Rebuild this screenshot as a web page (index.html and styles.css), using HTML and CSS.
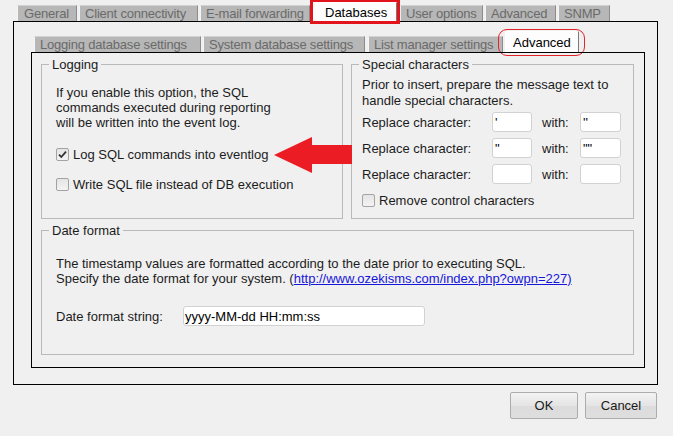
FILE: index.html
```html
<!DOCTYPE html>
<html>
<head>
<meta charset="utf-8">
<link rel="stylesheet" href="styles.css">
</head>
<body>
<div class="dialog">
  <div class="tabstrip outer-tabs">
    <div class="tab t-general">General</div>
    <div class="tab t-client">Client connectivity</div>
    <div class="tab t-email">E-mail forwarding</div>
    <div class="tab selected marked t-db">Databases</div>
    <div class="tab t-user">User options</div>
    <div class="tab t-adv">Advanced</div>
    <div class="tab t-snmp">SNMP</div>
  </div>
  <div class="outer-panel">
    <div class="tabstrip inner-tabs">
      <div class="tab t-logdb">Logging database settings</div>
      <div class="tab t-sysdb">System database settings</div>
      <div class="tab t-list">List manager settings</div>
      <div class="tab selected circled t-inadv">Advanced</div>
    </div>
    <div class="inner-panel">
      <div class="groups-top">
        <fieldset class="group logging">
          <legend>Logging</legend>
          <div class="group-body logging-body">
            <p class="note">If you enable this option, the SQL<br>commands executed during reporting<br>will be written into the event log.</p>
            <label class="check-row first">
              <span class="checkbox checked"><svg viewBox="0 0 13 13" width="13" height="13"><path d="M3 6.6 L5.3 9 L10 3.6" fill="none" stroke="#333" stroke-width="1.8"/></svg></span>
              <span>Log SQL commands into eventlog</span>
            </label>
            <label class="check-row">
              <span class="checkbox"></span>
              <span>Write SQL file instead of DB execution</span>
            </label>
          </div>
        </fieldset>
        <fieldset class="group special">
          <legend>Special characters</legend>
          <div class="group-body special-body">
            <p class="note">Prior to insert, prepare the message text to<br>handle special characters.</p>
            <div class="replace-grid">
              <span>Replace character:</span><span class="field small">'</span><span class="with">with:</span><span class="field small">''</span>
              <span>Replace character:</span><span class="field small">"</span><span class="with">with:</span><span class="field small">""</span>
              <span>Replace character:</span><span class="field small"></span><span class="with">with:</span><span class="field small"></span>
            </div>
            <label class="check-row remove">
              <span class="checkbox"></span>
              <span>Remove control characters</span>
            </label>
          </div>
        </fieldset>
      </div>
      <fieldset class="group date">
        <legend>Date format</legend>
        <div class="group-body date-body">
          <p class="note">The timestamp values are formatted according to the date prior to executing SQL.<br>Specify the date format for your system. (<a class="link" href="#">http://www.ozekisms.com/index.php?owpn=227)</a></p>
          <div class="date-row">
            <span class="date-label">Date format string:</span>
            <span class="field wide">yyyy-MM-dd HH:mm:ss</span>
          </div>
        </div>
      </fieldset>
      <svg class="arrow" width="78" height="36" viewBox="0 0 78 36"><polygon points="0,18 38,0 38,8 78,8 78,27 38,27 38,36" fill="#ec1c24"/></svg>
    </div>
  </div>
  <div class="buttons">
    <div class="btn ok">OK</div>
    <div class="btn cancel">Cancel</div>
  </div>
</div>
</body>
</html>
```
FILE: styles.css
```css
* { box-sizing: border-box; }
html, body { margin: 0; padding: 0; }
body {
  width: 673px;
  height: 436px;
  background: #f0f0f0;
  font-family: "Liberation Sans", Arial, sans-serif;
  font-size: 13px;
  color: #1c1c1c;
  overflow: hidden;
}
p { margin: 0; }

.tabstrip {
  display: flex;
  align-items: flex-end;
  gap: 2px;
}
.outer-tabs {
  height: 21px;
  padding-left: 17px;
}
.tab {
  flex: none;
  height: 16px;
  line-height: 15px;
  padding: 0 0 0 5px;
  background: #b7b7b7;
  color: #6a6a6a;
  border-left: 1px solid #f4f4f4;
  border-right: 1px solid #8c8c8c;
  border-top: 1px solid #d2d2d2;
  white-space: nowrap;
  letter-spacing: -0.2px;
  overflow: hidden;
}
.t-general { width: 60px; padding-left: 6px; }
.t-client { width: 119px; }
.t-email { width: 110px; }
.t-db { width: 84px; margin: 0 1px; }
.t-user { width: 83px; }
.t-adv { width: 71px; }
.t-snmp { width: 52px; }
.t-logdb { width: 167px; }
.t-sysdb { width: 162px; }
.t-list { width: 135px; margin-left: 1px; }
.t-inadv { width: 74px; }

.tab.selected {
  background: #fdfdfd;
  color: #000;
  border-left: 1px solid #fff;
  border-top: 1px solid #fff;
  border-right: 1px solid #7a7a7a;
  position: relative;
  overflow: visible;
  letter-spacing: 0;
}
.outer-tabs .tab.selected {
  height: 19px;
  line-height: 19px;
  padding-left: 11px;
}
.marked { outline: 3px solid #e3131b; }

.outer-panel {
  margin-left: 13px;
  width: 645px;
  height: 364px;
  border: 1px solid #000;
  padding: 0 12px 0 17px;
}
.inner-tabs {
  height: 30px;
  padding-left: 3px;
}
.inner-tabs .tab.selected {
  height: 21px;
  line-height: 21px;
  padding-left: 7px;
}
.circled::after {
  content: "";
  position: absolute;
  left: -8px;
  right: -7px;
  top: -3px;
  bottom: -4px;
  border: 1px solid #e3232a;
  border-radius: 9px;
}

.inner-panel {
  position: relative;
  width: 614px;
  height: 316px;
  border: 1px solid #000;
  padding: 4px 10px 0 9px;
}
.groups-top {
  display: grid;
  grid-template-columns: 302px 283px;
  column-gap: 8px;
}
.group {
  margin: 0;
  padding: 0;
  min-width: 0;
  border: 1px solid #b9b9b9;
}
.group legend {
  margin-left: 7px;
  padding: 0 3px;
  line-height: 15px;
  color: #1c1c1c;
}
.logging, .special { height: 162px; }
.note { line-height: 15px; }

.logging-body { padding: 13px 0 0 14px; }
.check-row {
  display: flex;
  align-items: center;
  gap: 4px;
  height: 20px;
}
.check-row.first { margin-top: 14px; }
.check-row + .check-row { margin-top: 10px; }
.checkbox {
  width: 13px;
  height: 13px;
  border: 1px solid #a3a3a3;
  border-radius: 2px;
  background: linear-gradient(#e4e4e4, #f4f4f4);
  display: flex;
}
.checkbox svg { display: block; margin: -1px; }

.special-body { padding: 5px 0 0 10px; }
.special-body .note { line-height: 16px; }
.replace-grid {
  margin-top: 3px;
  display: grid;
  grid-template-columns: 130px 40px 48px 41px;
  grid-auto-rows: 20px;
  row-gap: 6px;
  align-items: center;
}
.with { padding-left: 10px; }
.field {
  height: 20px;
  background: #fff;
  border: 1px solid #d2d2d2;
  border-radius: 3px;
  padding: 2px 0 0 2px;
  line-height: 15px;
  color: #000;
  white-space: nowrap;
}
.check-row.remove { margin-top: 6px; }

.date {
  margin-top: 4px;
  height: 132px;
}
.date-body { padding: 18px 0 0 14px; }
.link { color: #1616d8; text-decoration: underline; }
.date-row {
  margin-top: 20px;
  display: flex;
  align-items: center;
  height: 20px;
}
.date-label { width: 127px; }
.field.wide { width: 242px; padding-left: 1px; }

.arrow {
  position: absolute;
  left: 242px;
  top: 84px;
}

.buttons {
  display: flex;
  justify-content: flex-end;
  gap: 7px;
  padding: 7px 16px 0 0;
}
.btn {
  height: 27px;
  line-height: 25px;
  text-align: center;
  border: 1px solid #acacac;
  border-radius: 2px;
  background: linear-gradient(#f3f3f3, #e4e4e4 50%, #dcdcdc 51%, #dedede);
  color: #1a1a1a;
}
.ok { width: 68px; }
.cancel { width: 72px; }
```
